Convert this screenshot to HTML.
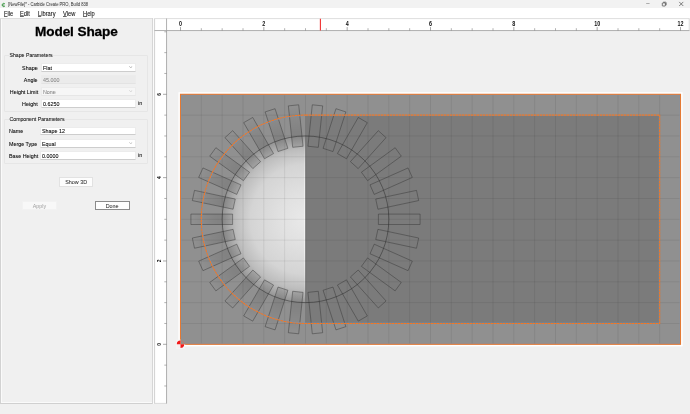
<!DOCTYPE html>
<html><head><meta charset="utf-8">
<style>
*{margin:0;padding:0;box-sizing:border-box}
html,body{width:690px;height:414px;overflow:hidden;background:#f0f0f0;font-family:"Liberation Sans",sans-serif;color:#000}
.a{position:absolute;white-space:nowrap}
.t{font-size:6.1px;line-height:1;transform:scaleX(0.88);transform-origin:0 0;-webkit-text-stroke:0.08px currentColor}
.fld{position:absolute;background:#fff;border:0.5px solid #ececec;border-bottom:0.7px solid #cdcdcd}
.btn{position:absolute;background:#fbfbfb;border:0.5px solid #dcdcdc;font-size:5.4px;text-align:center;white-space:nowrap}
.btn span{display:inline-block;transform:scaleX(0.9)}
</style></head><body><div style="position:absolute;left:0;top:0;width:690px;height:414px;will-change:transform">

<div class="a" style="left:0;top:0;width:690px;height:8px;background:#f2f2f2"></div>
<div class="a t" style="left:8.3px;top:3.1px;color:#333;font-size:4.8px;-webkit-text-stroke:0.02px #333;transform-origin:0 0;transform:scaleX(0.86)">[NewFile]* - Carbide Create PRO, Build 838</div>
<svg class="a" style="left:1px;top:1.5px" width="5" height="6" viewBox="0 0 5 6"><path d="M3.9 1.9 A1.6 1.6 0 1 0 3.9 4.1" fill="none" stroke="#3aa040" stroke-width="1.0"/><path d="M3.2 2.9 A0.6 0.6 0 1 0 3.2 3.5" fill="none" stroke="#1d5a2a" stroke-width="0.5"/></svg>
<svg class="a" style="left:640px;top:0" width="50" height="8" viewBox="0 0 50 8"><path d="M6.2 3.5H9.6" stroke="#444" stroke-width="0.4"/><rect x="22.3" y="2.9" width="3.1" height="3.1" rx="0.5" fill="none" stroke="#222" stroke-width="0.6"/><path d="M23.2 2.2H25.6Q26.2 2.2 26.2 2.8V5.2" fill="none" stroke="#222" stroke-width="0.55"/><path d="M39.2 1.9L43.3 6M43.3 1.9L39.2 6" stroke="#222" stroke-width="0.55"/></svg>
<div class="a" style="left:0;top:8px;width:690px;height:10.5px;background:#fff"></div>
<div class="a t" style="left:3.9px;top:11.3px;font-size:6.5px;color:#111"><u style="text-decoration-thickness:0.3px;text-underline-offset:0.3px;text-decoration-color:#666">F</u>ile</div>
<div class="a t" style="left:20.3px;top:11.3px;font-size:6.5px;color:#111"><u style="text-decoration-thickness:0.3px;text-underline-offset:0.3px;text-decoration-color:#666">E</u>dit</div>
<div class="a t" style="left:37.9px;top:11.3px;font-size:6.5px;color:#111"><u style="text-decoration-thickness:0.3px;text-underline-offset:0.3px;text-decoration-color:#666">L</u>ibrary</div>
<div class="a t" style="left:63px;top:11.3px;font-size:6.5px;color:#111"><u style="text-decoration-thickness:0.3px;text-underline-offset:0.3px;text-decoration-color:#666">V</u>iew</div>
<div class="a t" style="left:83.1px;top:11.3px;font-size:6.5px;color:#111"><u style="text-decoration-thickness:0.3px;text-underline-offset:0.3px;text-decoration-color:#666">H</u>elp</div>
<div class="a" style="left:0;top:18px;width:153px;height:385.8px;background:#f0f0f0"></div>
<div class="a" style="left:0.2px;top:18px;width:0.8px;height:385.8px;background:#d2d2d2"></div>
<div class="a" style="left:1.2px;top:19px;width:0.8px;height:383px;background:#fafafa"></div>
<div class="a" style="left:0;top:17.9px;width:153px;height:0.7px;background:#dedede"></div>
<div class="a" style="left:1px;top:401.9px;width:152px;height:0.8px;background:#fafafa"></div>
<div class="a" style="left:0;top:403px;width:153px;height:0.8px;background:#d0d0d0"></div>
<div class="a" style="left:152.1px;top:18px;width:0.8px;height:385.8px;background:#d6d6d6"></div>
<div class="a" style="left:153.1px;top:18px;width:0.9px;height:385.8px;background:#fbfbfb"></div>
<div class="a" style="left:35px;top:25.3px;font-size:13.6px;font-weight:bold;line-height:1;letter-spacing:-0.1px;-webkit-text-stroke:0.3px #000;color:#000">Model Shape</div>
<div class="a" style="left:4.3px;top:55px;width:144px;height:57px;border:0.6px solid #e6e6e6;border-radius:1px"></div>
<div class="a t" style="left:8.5px;top:51.7px;padding:0 0.6px;transform:scaleX(0.85);background:#f0f0f0;color:#111">Shape Parameters</div>
<div class="a t" style="right:652px;top:64.5px;color:#000;transform-origin:100% 0">Shape</div>
<div class="fld" style="left:40.8px;top:63px;width:95.6px;height:8.6px;background:#fff;border-color:#ececec;border-bottom-color:#cdcdcd"></div>
<div class="a t" style="left:42.8px;top:64.5px;color:#000">Flat</div>
<svg class="a" style="left:129.3px;top:66px" width="3.5" height="2.2" viewBox="0 0 3.5 2.2"><path d="M0.3 0.4 L1.75 1.8 L3.2 0.4" fill="none" stroke="#555" stroke-width="0.45"/></svg>
<div class="a t" style="right:652px;top:76.7px;color:#000;transform-origin:100% 0">Angle</div>
<div class="fld" style="left:40.8px;top:75.2px;width:95.6px;height:8.6px;background:#ebebeb;border-color:#ececec;border-bottom-color:#e3e3e3"></div>
<div class="a t" style="left:42.8px;top:76.7px;color:#8a8a8a">45.000</div>
<div class="a t" style="right:652px;top:88.7px;color:#000;transform-origin:100% 0">Height Limit</div>
<div class="fld" style="left:40.8px;top:87.2px;width:95.6px;height:8.6px;background:#f6f6f6;border-color:#ececec;border-bottom-color:#e6e6e6"></div>
<div class="a t" style="left:42.8px;top:88.7px;color:#8a8a8a">None</div>
<svg class="a" style="left:129.3px;top:90.2px" width="3.5" height="2.2" viewBox="0 0 3.5 2.2"><path d="M0.3 0.4 L1.75 1.8 L3.2 0.4" fill="none" stroke="#aaa" stroke-width="0.45"/></svg>
<div class="a t" style="right:652px;top:100.5px;color:#000;transform-origin:100% 0">Height</div>
<div class="fld" style="left:40.8px;top:99px;width:95.6px;height:8.6px;background:#fff;border-color:#ececec;border-bottom-color:#cdcdcd"></div>
<div class="a t" style="left:42.8px;top:100.5px;color:#000">0.6250</div>
<div class="a t" style="left:138.3px;top:100.2px;color:#111">in</div>
<div class="a" style="left:4.3px;top:119px;width:144px;height:45px;border:0.6px solid #e6e6e6;border-radius:1px"></div>
<div class="a t" style="left:8.5px;top:115.8px;padding:0 0.6px;transform:scaleX(0.85);background:#f0f0f0;color:#111">Component Parameters</div>
<div class="a t" style="left:9.4px;top:128.3px;color:#000">Name</div>
<div class="fld" style="left:40.3px;top:126.8px;width:96.1px;height:8.6px"></div>
<div class="a t" style="left:42.3px;top:128.3px;color:#000">Shape 12</div>
<div class="a t" style="left:9.4px;top:140.5px;color:#000">Merge Type</div>
<div class="fld" style="left:40.3px;top:139px;width:96.1px;height:8.6px"></div>
<div class="a t" style="left:42.3px;top:140.5px;color:#000">Equal</div>
<svg class="a" style="left:129.3px;top:142px" width="3.5" height="2.2" viewBox="0 0 3.5 2.2"><path d="M0.3 0.4 L1.75 1.8 L3.2 0.4" fill="none" stroke="#777" stroke-width="0.45"/></svg>
<div class="a t" style="left:9.4px;top:152.5px;color:#000">Base Height</div>
<div class="fld" style="left:40.3px;top:151px;width:96.1px;height:8.6px"></div>
<div class="a t" style="left:42.3px;top:152.5px;color:#000">0.0000</div>
<div class="a t" style="left:138.3px;top:152.2px;color:#111">in</div>
<div class="btn" style="left:58.6px;top:177.4px;width:34.8px;height:10px;line-height:9px;color:#111;background:#fdfdfd;border-color:#e2e2e2;font-size:6px"><span>Show 3D</span></div>
<div class="btn" style="left:22.2px;top:200.9px;width:34.8px;height:9.6px;line-height:8.7px;color:#a0a0a0;background:#f8f8f8;border-color:#f2f2f2;font-size:6px"><span>Apply</span></div>
<div class="btn" style="left:95.1px;top:201.3px;width:34.5px;height:9px;line-height:8px;color:#111;background:#fdfdfd;border:0.6px solid #8a8a8a;font-size:6px"><span>Done</span></div>
<svg class="a" style="left:0;top:0;will-change:transform" width="690" height="414" viewBox="0 0 690 414">
<defs><clipPath id="cv"><rect x="166.5" y="30.5" width="523.5" height="374"/></clipPath>
<radialGradient id="dome" cx="305.501" cy="219.299" r="83.334" gradientUnits="userSpaceOnUse"><stop offset="0" stop-color="#e9e9e9"/><stop offset="0.3" stop-color="#e1e1e1"/><stop offset="0.66" stop-color="#d4d4d4"/><stop offset="0.84" stop-color="#bdbdbd"/><stop offset="0.95" stop-color="#a2a2a2"/><stop offset="1" stop-color="#949494"/></radialGradient>
<clipPath id="lefth"><rect x="0" y="0" width="305.501" height="414"/></clipPath>
</defs>
<rect x="154.5" y="18.5" width="535" height="12" fill="#fff"/>
<rect x="154.5" y="18.5" width="12" height="385" fill="#fff"/>
<line x1="154.5" y1="18.6" x2="689.5" y2="18.6" stroke="#d0d0d0" stroke-width="0.7"/>
<line x1="154.6" y1="18.5" x2="154.6" y2="403.6" stroke="#c6c6c6" stroke-width="0.8"/>
<line x1="689.2" y1="18.5" x2="689.2" y2="30.5" stroke="#d0d0d0" stroke-width="0.7"/>
<line x1="154.5" y1="403.4" x2="166.5" y2="403.4" stroke="#d0d0d0" stroke-width="0.7"/>
<line x1="154.5" y1="30.55" x2="689.5" y2="30.55" stroke="#a2a2a2" stroke-width="0.85"/>
<line x1="166.55" y1="18.5" x2="166.55" y2="403.6" stroke="#a2a2a2" stroke-width="0.85"/>
<line x1="180.50" y1="27" x2="180.50" y2="30.5" stroke="#555" stroke-width="0.5"/>
<text x="0" y="0" transform="translate(180.50 25.5) scale(0.82 1)" font-size="6.6" font-weight="bold" text-anchor="middle" fill="#111" font-family="Liberation Sans">0</text>
<line x1="201.33" y1="28.2" x2="201.33" y2="30.5" stroke="#666" stroke-width="0.5"/>
<line x1="222.17" y1="28.2" x2="222.17" y2="30.5" stroke="#666" stroke-width="0.5"/>
<line x1="243.00" y1="28.2" x2="243.00" y2="30.5" stroke="#666" stroke-width="0.5"/>
<line x1="263.83" y1="27" x2="263.83" y2="30.5" stroke="#555" stroke-width="0.5"/>
<text x="0" y="0" transform="translate(263.83 25.5) scale(0.82 1)" font-size="6.6" font-weight="bold" text-anchor="middle" fill="#111" font-family="Liberation Sans">2</text>
<line x1="284.67" y1="28.2" x2="284.67" y2="30.5" stroke="#666" stroke-width="0.5"/>
<line x1="305.50" y1="28.2" x2="305.50" y2="30.5" stroke="#666" stroke-width="0.5"/>
<line x1="326.33" y1="28.2" x2="326.33" y2="30.5" stroke="#666" stroke-width="0.5"/>
<line x1="347.17" y1="27" x2="347.17" y2="30.5" stroke="#555" stroke-width="0.5"/>
<text x="0" y="0" transform="translate(347.17 25.5) scale(0.82 1)" font-size="6.6" font-weight="bold" text-anchor="middle" fill="#111" font-family="Liberation Sans">4</text>
<line x1="368.00" y1="28.2" x2="368.00" y2="30.5" stroke="#666" stroke-width="0.5"/>
<line x1="388.84" y1="28.2" x2="388.84" y2="30.5" stroke="#666" stroke-width="0.5"/>
<line x1="409.67" y1="28.2" x2="409.67" y2="30.5" stroke="#666" stroke-width="0.5"/>
<line x1="430.50" y1="27" x2="430.50" y2="30.5" stroke="#555" stroke-width="0.5"/>
<text x="0" y="0" transform="translate(430.50 25.5) scale(0.82 1)" font-size="6.6" font-weight="bold" text-anchor="middle" fill="#111" font-family="Liberation Sans">6</text>
<line x1="451.34" y1="28.2" x2="451.34" y2="30.5" stroke="#666" stroke-width="0.5"/>
<line x1="472.17" y1="28.2" x2="472.17" y2="30.5" stroke="#666" stroke-width="0.5"/>
<line x1="493.00" y1="28.2" x2="493.00" y2="30.5" stroke="#666" stroke-width="0.5"/>
<line x1="513.84" y1="27" x2="513.84" y2="30.5" stroke="#555" stroke-width="0.5"/>
<text x="0" y="0" transform="translate(513.84 25.5) scale(0.82 1)" font-size="6.6" font-weight="bold" text-anchor="middle" fill="#111" font-family="Liberation Sans">8</text>
<line x1="534.67" y1="28.2" x2="534.67" y2="30.5" stroke="#666" stroke-width="0.5"/>
<line x1="555.50" y1="28.2" x2="555.50" y2="30.5" stroke="#666" stroke-width="0.5"/>
<line x1="576.34" y1="28.2" x2="576.34" y2="30.5" stroke="#666" stroke-width="0.5"/>
<line x1="597.17" y1="27" x2="597.17" y2="30.5" stroke="#555" stroke-width="0.5"/>
<text x="0" y="0" transform="translate(597.17 25.5) scale(0.82 1)" font-size="6.6" font-weight="bold" text-anchor="middle" fill="#111" font-family="Liberation Sans">10</text>
<line x1="618.00" y1="28.2" x2="618.00" y2="30.5" stroke="#666" stroke-width="0.5"/>
<line x1="638.84" y1="28.2" x2="638.84" y2="30.5" stroke="#666" stroke-width="0.5"/>
<line x1="659.67" y1="28.2" x2="659.67" y2="30.5" stroke="#666" stroke-width="0.5"/>
<line x1="680.50" y1="27" x2="680.50" y2="30.5" stroke="#555" stroke-width="0.5"/>
<text x="0" y="0" transform="translate(680.50 25.5) scale(0.82 1)" font-size="6.6" font-weight="bold" text-anchor="middle" fill="#111" font-family="Liberation Sans">12</text>
<line x1="164.3" y1="385.97" x2="166.5" y2="385.97" stroke="#666" stroke-width="0.5"/>
<line x1="164.3" y1="365.13" x2="166.5" y2="365.13" stroke="#666" stroke-width="0.5"/>
<line x1="163" y1="344.30" x2="166.5" y2="344.30" stroke="#555" stroke-width="0.5"/>
<text x="0" y="0" transform="translate(161.3 344.30) rotate(-90) scale(0.82 1)" font-size="6.0" font-weight="bold" text-anchor="middle" fill="#111" font-family="Liberation Sans">0</text>
<line x1="164.3" y1="323.47" x2="166.5" y2="323.47" stroke="#666" stroke-width="0.5"/>
<line x1="164.3" y1="302.63" x2="166.5" y2="302.63" stroke="#666" stroke-width="0.5"/>
<line x1="164.3" y1="281.80" x2="166.5" y2="281.80" stroke="#666" stroke-width="0.5"/>
<line x1="163" y1="260.97" x2="166.5" y2="260.97" stroke="#555" stroke-width="0.5"/>
<text x="0" y="0" transform="translate(161.3 260.97) rotate(-90) scale(0.82 1)" font-size="6.0" font-weight="bold" text-anchor="middle" fill="#111" font-family="Liberation Sans">2</text>
<line x1="164.3" y1="240.13" x2="166.5" y2="240.13" stroke="#666" stroke-width="0.5"/>
<line x1="164.3" y1="219.30" x2="166.5" y2="219.30" stroke="#666" stroke-width="0.5"/>
<line x1="164.3" y1="198.47" x2="166.5" y2="198.47" stroke="#666" stroke-width="0.5"/>
<line x1="163" y1="177.63" x2="166.5" y2="177.63" stroke="#555" stroke-width="0.5"/>
<text x="0" y="0" transform="translate(161.3 177.63) rotate(-90) scale(0.82 1)" font-size="6.0" font-weight="bold" text-anchor="middle" fill="#111" font-family="Liberation Sans">4</text>
<line x1="164.3" y1="156.80" x2="166.5" y2="156.80" stroke="#666" stroke-width="0.5"/>
<line x1="164.3" y1="135.97" x2="166.5" y2="135.97" stroke="#666" stroke-width="0.5"/>
<line x1="164.3" y1="115.13" x2="166.5" y2="115.13" stroke="#666" stroke-width="0.5"/>
<line x1="163" y1="94.30" x2="166.5" y2="94.30" stroke="#555" stroke-width="0.5"/>
<text x="0" y="0" transform="translate(161.3 94.30) rotate(-90) scale(0.82 1)" font-size="6.0" font-weight="bold" text-anchor="middle" fill="#111" font-family="Liberation Sans">6</text>
<line x1="164.3" y1="73.46" x2="166.5" y2="73.46" stroke="#666" stroke-width="0.5"/>
<line x1="164.3" y1="52.63" x2="166.5" y2="52.63" stroke="#666" stroke-width="0.5"/>
<line x1="164.3" y1="31.80" x2="166.5" y2="31.80" stroke="#666" stroke-width="0.5"/>
<line x1="320.4" y1="18.7" x2="320.4" y2="30.6" stroke="#f03030" stroke-width="1.1"/>
<g clip-path="url(#cv)">
<rect x="180.5" y="94.298" width="500.004" height="250.002" fill="none" stroke="#fff" stroke-width="4.2"/>
<rect x="180.5" y="94.298" width="500.004" height="250.002" fill="#909090"/>
<circle cx="305.501" cy="219.299" r="83.334" fill="url(#dome)" clip-path="url(#lefth)"/>
<rect x="305.501" y="115.13150000000002" width="354.1695" height="208.335" fill="#7b7b7b"/>
<linearGradient id="hl" x1="0" y1="135.965" x2="0" y2="302.63300000000004" gradientUnits="userSpaceOnUse"><stop offset="0" stop-color="#fff" stop-opacity="0"/><stop offset="0.3" stop-color="#fff" stop-opacity="0.55"/><stop offset="0.7" stop-color="#fff" stop-opacity="0.55"/><stop offset="1" stop-color="#fff" stop-opacity="0"/></linearGradient>
<rect x="304.20099999999996" y="135.965" width="0.9" height="166.668" fill="url(#hl)"/>
<rect x="305.501" y="135.965" width="0.7" height="166.668" fill="#000" fill-opacity="0.1"/>
<path d="M201.33 94.30V344.30M222.17 94.30V344.30M243.00 94.30V344.30M263.83 94.30V344.30M284.67 94.30V344.30M305.50 94.30V344.30M326.33 94.30V344.30M347.17 94.30V344.30M368.00 94.30V344.30M388.84 94.30V344.30M409.67 94.30V344.30M430.50 94.30V344.30M451.34 94.30V344.30M472.17 94.30V344.30M493.00 94.30V344.30M513.84 94.30V344.30M534.67 94.30V344.30M555.50 94.30V344.30M576.34 94.30V344.30M597.17 94.30V344.30M618.00 94.30V344.30M638.84 94.30V344.30M659.67 94.30V344.30M180.50 323.47H680.50M180.50 302.63H680.50M180.50 281.80H680.50M180.50 260.97H680.50M180.50 240.13H680.50M180.50 219.30H680.50M180.50 198.47H680.50M180.50 177.63H680.50M180.50 156.80H680.50M180.50 135.97H680.50M180.50 115.13H680.50" stroke="#000" stroke-opacity="0.09" stroke-width="0.8" fill="none"/>
<radialGradient id="spg" cx="305.501" cy="219.299" r="114.58425" gradientUnits="userSpaceOnUse"><stop offset="0.62" stop-color="#000" stop-opacity="0.1"/><stop offset="0.76" stop-color="#000" stop-opacity="0.1"/><stop offset="0.92" stop-color="#000" stop-opacity="0.04"/><stop offset="1" stop-color="#000" stop-opacity="0"/></radialGradient>
<path d="M378.42 214.09L420.09 214.09L420.09 224.51L378.42 224.51ZM375.74 199.04L416.50 190.38L418.66 200.57L377.91 209.23ZM370.00 184.88L408.06 167.94L412.30 177.45L374.23 194.40ZM361.43 172.23L395.14 147.73L401.26 156.16L367.55 180.65ZM350.42 161.63L378.30 130.66L386.04 137.63L358.16 168.60ZM337.45 153.55L358.28 117.46L367.30 122.67L346.47 158.75ZM323.08 148.34L335.96 108.71L345.86 111.93L332.99 151.56ZM307.94 146.24L312.30 104.80L322.66 105.89L318.30 147.33ZM292.70 147.33L288.34 105.89L298.70 104.80L303.06 146.24ZM278.01 151.56L265.14 111.93L275.05 108.71L287.92 148.34ZM264.53 158.75L243.70 122.67L252.72 117.46L273.55 153.55ZM252.84 168.60L224.96 137.63L232.70 130.66L260.58 161.63ZM243.45 180.65L209.74 156.16L215.86 147.73L249.57 172.23ZM236.77 194.40L198.70 177.45L202.94 167.94L241.01 184.88ZM233.09 209.23L192.34 200.57L194.50 190.38L235.26 199.04ZM232.58 224.51L190.92 224.51L190.92 214.09L232.58 214.09ZM235.26 239.55L194.50 248.22L192.34 238.03L233.09 229.36ZM241.01 253.72L202.94 270.66L198.70 261.15L236.77 244.20ZM249.57 266.37L215.86 290.86L209.74 282.44L243.45 257.95ZM260.58 276.97L232.70 307.94L224.96 300.97L252.84 270.00ZM273.55 285.05L252.72 321.14L243.70 315.93L264.53 279.84ZM287.92 290.26L275.05 329.88L265.14 326.67L278.01 287.04ZM303.06 292.36L298.70 333.80L288.34 332.71L292.70 291.27ZM318.30 291.27L322.66 332.71L312.30 333.80L307.94 292.36ZM332.99 287.04L345.86 326.67L335.96 329.88L323.08 290.26ZM346.47 279.84L367.30 315.93L358.28 321.14L337.45 285.05ZM358.16 270.00L386.04 300.97L378.30 307.94L350.42 276.97ZM367.55 257.95L401.26 282.44L395.14 290.86L361.43 266.37ZM374.23 244.20L412.30 261.15L408.06 270.66L370.00 253.72ZM377.91 229.36L418.66 238.03L416.50 248.22L375.74 239.55Z" fill="url(#spg)" clip-path="url(#lefth)"/>
<circle cx="305.501" cy="219.299" r="83.334" fill="none" stroke="#242424" stroke-width="0.48"/>
<path d="M378.42 214.09L420.09 214.09L420.09 224.51L378.42 224.51ZM375.74 199.04L416.50 190.38L418.66 200.57L377.91 209.23ZM370.00 184.88L408.06 167.94L412.30 177.45L374.23 194.40ZM361.43 172.23L395.14 147.73L401.26 156.16L367.55 180.65ZM350.42 161.63L378.30 130.66L386.04 137.63L358.16 168.60ZM337.45 153.55L358.28 117.46L367.30 122.67L346.47 158.75ZM323.08 148.34L335.96 108.71L345.86 111.93L332.99 151.56ZM307.94 146.24L312.30 104.80L322.66 105.89L318.30 147.33ZM292.70 147.33L288.34 105.89L298.70 104.80L303.06 146.24ZM278.01 151.56L265.14 111.93L275.05 108.71L287.92 148.34ZM264.53 158.75L243.70 122.67L252.72 117.46L273.55 153.55ZM252.84 168.60L224.96 137.63L232.70 130.66L260.58 161.63ZM243.45 180.65L209.74 156.16L215.86 147.73L249.57 172.23ZM236.77 194.40L198.70 177.45L202.94 167.94L241.01 184.88ZM233.09 209.23L192.34 200.57L194.50 190.38L235.26 199.04ZM232.58 224.51L190.92 224.51L190.92 214.09L232.58 214.09ZM235.26 239.55L194.50 248.22L192.34 238.03L233.09 229.36ZM241.01 253.72L202.94 270.66L198.70 261.15L236.77 244.20ZM249.57 266.37L215.86 290.86L209.74 282.44L243.45 257.95ZM260.58 276.97L232.70 307.94L224.96 300.97L252.84 270.00ZM273.55 285.05L252.72 321.14L243.70 315.93L264.53 279.84ZM287.92 290.26L275.05 329.88L265.14 326.67L278.01 287.04ZM303.06 292.36L298.70 333.80L288.34 332.71L292.70 291.27ZM318.30 291.27L322.66 332.71L312.30 333.80L307.94 292.36ZM332.99 287.04L345.86 326.67L335.96 329.88L323.08 290.26ZM346.47 279.84L367.30 315.93L358.28 321.14L337.45 285.05ZM358.16 270.00L386.04 300.97L378.30 307.94L350.42 276.97ZM367.55 257.95L401.26 282.44L395.14 290.86L361.43 266.37ZM374.23 244.20L412.30 261.15L408.06 270.66L370.00 253.72ZM377.91 229.36L418.66 238.03L416.50 248.22L375.74 239.55Z" fill="none" stroke="#2e2e2e" stroke-width="0.43"/>
<clipPath id="bigr"><rect x="180.5" y="94.298" width="500.004" height="250.002"/></clipPath>
<rect x="180.5" y="94.298" width="500.004" height="250.002" fill="none" stroke="#7896b0" stroke-width="2.4" stroke-opacity="0.55" clip-path="url(#bigr)"/>
<rect x="180.5" y="94.298" width="500.004" height="250.002" fill="none" stroke="#e47a34" stroke-width="1.1"/>
<clipPath id="ushape"><path d="M305.50 115.13H659.67V323.47H305.50A104.17 104.17 0 0 1 305.50 115.13Z"/></clipPath>
<path d="M305.50 115.13H659.67V323.47H305.50A104.17 104.17 0 0 1 305.50 115.13Z" fill="none" stroke="#6a94bf" stroke-width="1.6" clip-path="url(#ushape)"/>
<path d="M305.50 115.13H659.67V323.47H305.50A104.17 104.17 0 0 1 305.50 115.13Z" fill="none" stroke="#f47824" stroke-width="1.1" stroke-dasharray="2.5 0.5"/>
<path d="M180.5 344.3V339.6H175.8V349.0H185.2V344.3Z" fill="#f4f4f4" opacity="0.85"/>
<path d="M180.5 344.3H176.8A3.7 3.7 0 0 0 180.5 348.0Z" fill="#f7eeee"/>
<path d="M180.5 344.3V340.6A3.7 3.7 0 0 0 176.8 344.3Z M180.5 344.3V348.0A3.7 3.7 0 0 0 184.2 344.3Z" fill="#f21818"/>
<path d="M180.5 340.6A3.7 3.7 0 0 1 184.2 344.3" fill="none" stroke="#e07050" stroke-width="0.5"/>
</g>
</svg>
</div></body></html>
